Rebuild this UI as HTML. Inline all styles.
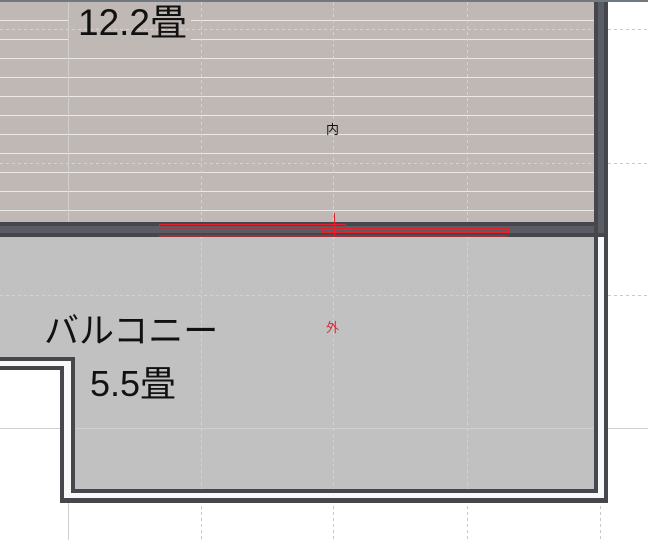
<!DOCTYPE html>
<html><head><meta charset="utf-8"><style>
body{margin:0;width:648px;height:540px;overflow:hidden;background:#fff;position:relative;font-family:"Liberation Sans","Noto Sans CJK JP",sans-serif}
div{position:absolute;box-sizing:border-box}
.t{color:#111;white-space:nowrap;line-height:1}
</style></head><body>
<svg width="648" height="540" style="position:absolute;left:0;top:0">
<g stroke="#c8c8c8" stroke-width="1" stroke-dasharray="3,3">
<line x1="608" y1="29.5" x2="648" y2="29.5"/><line x1="608" y1="163.5" x2="648" y2="163.5"/><line x1="608" y1="295.5" x2="648" y2="295.5"/>
<line x1="201.5" y1="500" x2="201.5" y2="540"/><line x1="333.5" y1="500" x2="333.5" y2="540"/><line x1="467.5" y1="500" x2="467.5" y2="540"/><line x1="600.5" y1="500" x2="600.5" y2="540"/>
</g>
<line x1="0" y1="428.5" x2="648" y2="428.5" stroke="#cfcfcf"/>
<line x1="68.5" y1="500" x2="68.5" y2="540" stroke="#cfcfcf"/>
<rect x="0" y="0" width="648" height="2" fill="#707880"/>
<rect x="0" y="2" width="594" height="220" fill="#c0b8b5"/>
<g stroke="#ebe9e8" stroke-width="1">
<line x1="0" y1="20.5" x2="594" y2="20.5"/><line x1="0" y1="39.5" x2="594" y2="39.5"/><line x1="0" y1="58.5" x2="594" y2="58.5"/><line x1="0" y1="77.5" x2="594" y2="77.5"/><line x1="0" y1="96.5" x2="594" y2="96.5"/><line x1="0" y1="115.5" x2="594" y2="115.5"/><line x1="0" y1="134.5" x2="594" y2="134.5"/><line x1="0" y1="153.5" x2="594" y2="153.5"/><line x1="0" y1="172.5" x2="594" y2="172.5"/><line x1="0" y1="191.5" x2="594" y2="191.5"/><line x1="0" y1="210.5" x2="594" y2="210.5"/>
</g>
<rect x="68" y="3" width="123" height="38" fill="#c0b8b5"/>
<rect x="0" y="237" width="598" height="120" fill="#c0c1c0"/>
<rect x="75" y="350" width="519" height="139" fill="#c0c1c0"/>
<g stroke="#d4d4d4" stroke-width="1" stroke-dasharray="3,3">
<line x1="201.5" y1="2" x2="201.5" y2="489"/><line x1="333.5" y1="2" x2="333.5" y2="489"/><line x1="467.5" y1="2" x2="467.5" y2="489"/>
<line x1="0" y1="29.5" x2="594" y2="29.5"/><line x1="0" y1="163.5" x2="594" y2="163.5"/><line x1="0" y1="295.5" x2="594" y2="295.5"/>
</g>
<line x1="68.5" y1="2" x2="68.5" y2="222" stroke="#d0d0d0"/>
<line x1="75" y1="428.5" x2="594" y2="428.5" stroke="#d0d0d0"/>
<rect x="0" y="222" width="608" height="15" fill="#46474c"/>
<rect x="0" y="226" width="604" height="7" fill="#5a5d64"/>
<rect x="594" y="2" width="4" height="235" fill="#46474c"/>
<rect x="598" y="2" width="6" height="224" fill="#5a5d64"/>
<rect x="604" y="2" width="4" height="235" fill="#46474c"/>
<rect x="594" y="237" width="4" height="256" fill="#46474c"/>
<rect x="604" y="237" width="4" height="266" fill="#46474c"/>
<rect x="598" y="237" width="6" height="262" fill="#f8f8f8"/>
<rect x="71" y="357" width="4" height="136" fill="#46474c"/>
<rect x="0" y="357" width="75" height="4" fill="#46474c"/>
<rect x="71" y="489" width="527" height="4" fill="#46474c"/>
<rect x="0" y="361" width="71" height="5" fill="#f8f8f8"/>
<rect x="63" y="366" width="8" height="132" fill="#f8f8f8"/>
<rect x="63" y="493" width="541" height="5" fill="#f8f8f8"/>
<rect x="0" y="366" width="63" height="4" fill="#46474c"/>
<rect x="60" y="366" width="4" height="137" fill="#46474c"/>
<rect x="60" y="498" width="548" height="5" fill="#46474c"/>
<g stroke="#e8202c" stroke-width="1" fill="none">
<rect x="159.5" y="224.5" width="186" height="4.5"/>
<rect x="322.5" y="228.5" width="186" height="4"/>
<line x1="159" y1="236" x2="508" y2="236"/>
<line x1="334.5" y1="213" x2="334.5" y2="235"/>
</g>
</svg>
<div class="t" style="left:78px;top:4px;font-size:37px">12.2畳</div>
<div class="t" style="left:326px;top:123px;font-size:13px">内</div>
<div class="t" style="left:326px;top:321px;font-size:13px;color:#e8202c">外</div>
<div class="t" style="left:44px;top:314px;font-size:35px">バルコニー</div>
<div class="t" style="left:90px;top:366px;font-size:36px">5.5畳</div>
</body></html>
